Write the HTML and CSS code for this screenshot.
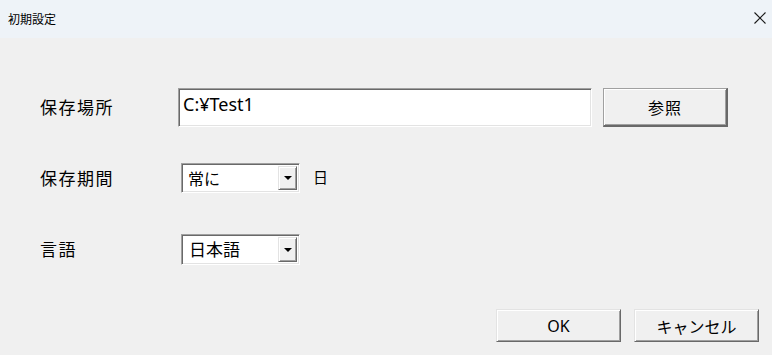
FILE: index.html
```html
<!DOCTYPE html>
<html>
<head>
  <meta charset="utf-8">
  <link rel="stylesheet" href="styles.css">
</head>
<body>
  <div class="dialog">
    <div class="title-bar">
      <span class="title">初期設定</span>
      <svg class="close" width="12" height="12" viewBox="0 0 12 12">
        <path d="M0.5 0.5 L11.5 11.5 M11.5 0.5 L0.5 11.5" stroke="#1a1a1a" stroke-width="1.1" fill="none"/>
      </svg>
    </div>

    <div class="content">
      <div class="row row-path">
        <label class="label">保存場所</label>
        <div class="text-box">C:¥Test1</div>
        <button class="btn btn-browse">参照</button>
      </div>

      <div class="row row-period">
        <label class="label">保存期間</label>
        <div class="combo">
          <span class="combo-value">常に</span>
          <span class="combo-arrow"><span class="tri"></span></span>
        </div>
        <span class="unit">日</span>
      </div>

      <div class="row row-lang">
        <label class="label">言語</label>
        <div class="combo combo-lang">
          <span class="combo-value">日本語</span>
          <span class="combo-arrow"><span class="tri"></span></span>
        </div>
      </div>

      <div class="footer">
        <button class="btn btn-foot btn-ok">OK</button>
        <button class="btn btn-foot">キャンセル</button>
      </div>
    </div>
  </div>
</body>
</html>
```

FILE: styles.css
```css
html, body {
  margin: 0;
  padding: 0;
}

body {
  width: 772px;
  height: 355px;
  background: #f0f0f0;
  font-family: "Noto Sans", "Noto Sans CJK JP", sans-serif;
  color: #000;
  overflow: hidden;
}

.title-bar {
  height: 38px;
  background: #eef3f8;
  display: flex;
  align-items: center;
  justify-content: space-between;
  padding: 0 6px 0 8px;
}

.title {
  font-family: "Noto Sans CJK JP", sans-serif;
  font-size: 12px;
  margin-top: -1px;
}

.close {
  margin-top: -2px;
}

.content {
  padding: 50px 13px 0 40px;
}

.row {
  display: flex;
  align-items: center;
}

.label {
  width: 138px;
  font-family: "Noto Sans CJK JP", sans-serif;
  font-size: 17px;
  letter-spacing: 1.5px;
  margin-top: -2px;
}

.row-path {
  height: 39px;
}

.text-box {
  box-sizing: border-box;
  width: 414px;
  height: 39px;
  background: #fff;
  border: 1px solid;
  border-color: #a0a0a0 #fff #fff #a0a0a0;
  box-shadow: inset 1px 1px 0 #696969, inset -1px -1px 0 #e3e3e3;
  padding: 3px 0 0 4px;
  font-family: "Noto Sans", "Noto Sans CJK JP", sans-serif;
  font-size: 18px;
  line-height: 24px;
  align-self: flex-start;
}

.btn {
  box-sizing: border-box;
  background: #f0f0f0;
  font-family: "Noto Sans CJK JP", sans-serif;
  color: #000;
  padding: 0;
  cursor: pointer;
}

.btn-browse {
  width: 125px;
  height: 39px;
  margin-left: 11px;
  border-style: solid;
  border-width: 1px 2px 2px 1px;
  border-color: #a0a0a0 #696969 #696969 #a0a0a0;
  box-shadow: inset 1px 1px 0 #fff, inset -1px -1px 0 #a0a0a0;
  font-size: 16px;
  letter-spacing: 1px;
  align-self: flex-start;
}

.row-period {
  margin-top: 36px;
  height: 30px;
}

.combo {
  box-sizing: border-box;
  width: 119px;
  height: 30px;
  margin-left: 3px;
  background: #fff;
  border: 1px solid;
  border-color: #a0a0a0 #fff #fff #a0a0a0;
  box-shadow: inset 1px 1px 0 #696969, inset -1px -1px 0 #e3e3e3;
  display: flex;
  align-items: stretch;
  padding: 2px;
}

.combo-value {
  flex: 1;
  font-family: "Noto Sans CJK JP", sans-serif;
  font-size: 16px;
  line-height: 24px;
  padding-left: 4px;
}

.combo-lang {
  height: 31px;
}

.combo-lang .combo-value {
  font-size: 17px;
  padding-left: 5px;
}

.combo-arrow {
  box-sizing: border-box;
  width: 19px;
  background: #f0f0f0;
  border-style: solid;
  border-width: 1px;
  border-color: #e3e3e3 #696969 #696969 #e3e3e3;
  box-shadow: inset 1px 1px 0 #fff, inset -1px -1px 0 #a0a0a0;
  display: flex;
  align-items: center;
  justify-content: center;
}

.tri {
  width: 0;
  height: 0;
  border-left: 4px solid transparent;
  border-right: 4px solid transparent;
  border-top: 4px solid #000;
}

.unit {
  margin-left: 13px;
  margin-top: -3px;
  font-family: "Noto Sans CJK JP", sans-serif;
  font-size: 15px;
}

.row-lang {
  margin-top: 41px;
  height: 31px;
}

.footer {
  display: flex;
  justify-content: flex-end;
  gap: 13px;
  margin-top: 44px;
}

.btn-foot {
  width: 125px;
  height: 33px;
  border-style: solid;
  border-width: 1px;
  border-color: #e3e3e3 #696969 #696969 #e3e3e3;
  box-shadow: inset 1px 1px 0 #fff, inset -1px -1px 0 #a0a0a0;
  font-size: 16px;
}

.btn-ok {
  font-family: "Noto Sans", sans-serif;
}
```
